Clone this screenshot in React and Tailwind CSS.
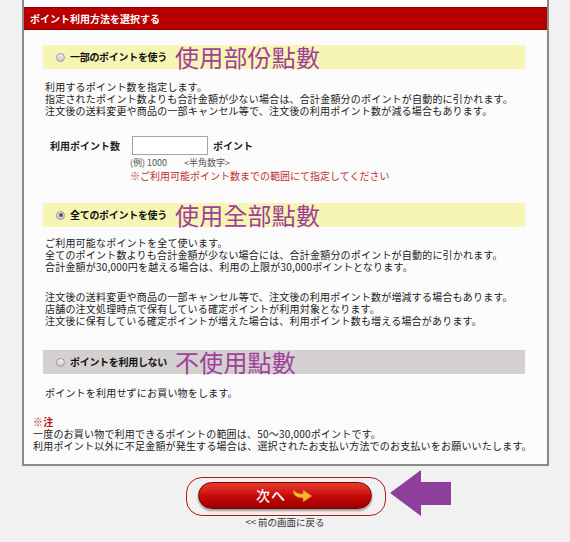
import { useState } from 'react'

const jp = { fontFamily: '"Noto Sans CJK JP", "Noto Sans", sans-serif' }
const tc = { fontFamily: '"Noto Sans CJK TC", "Noto Sans", sans-serif' }

function Radio({ checked }) {
  return (
    <span className="w-[9px] h-[9px] rounded-full border border-[#9a9a9a] bg-gradient-to-b from-[#f4f4f4] to-[#c8c8c8] flex items-center justify-center shrink-0">
      {checked && <span className="w-[4px] h-[4px] rounded-full bg-[#555]" />}
    </span>
  )
}

function OptionBar({ checked, label, zh, grey, onClick }) {
  return (
    <div
      onClick={onClick}
      className={`ml-[10px] mr-[22px] h-[24px] flex items-center pl-[13px] gap-[5px] cursor-pointer ${grey ? 'bg-[#d3d0cf]' : 'bg-[#f6f5b4]'}`}
    >
      <Radio checked={checked} />
      <span className="text-[10px] font-bold text-[#111] tracking-[-0.3px]">{label}</span>
      <span style={tc} className="text-[24px] leading-[24px] text-[#a0409a] ml-[3px]">{zh}</span>
    </div>
  )
}

export default function App() {
  const [mode, setMode] = useState('all')
  const [points, setPoints] = useState('')

  return (
    <div style={jp} className="w-[570px] h-[542px] bg-[#f1f1f1] overflow-hidden text-[#222]">
      {/* main panel */}
      <div className="ml-[22px] w-[527px] h-[466px] border-x-2 border-b-2 border-[#8a8a8a] bg-[#fbfbfb] pt-[7px]">
        <div className="h-[23px] bg-[#b90000] border-y border-[#8e0000] flex items-center pl-[6px]">
          <span className="text-[10px] font-bold text-white">ポイント利用方法を選択する</span>
        </div>

        <div className="pl-[9px] pt-[15px] text-[10px] leading-[12px] tracking-[0.2px]">
          {/* some points */}
          <OptionBar checked={mode === 'some'} label="一部のポイントを使う" zh="使用部份點數" onClick={() => setMode('some')} />
          <div className="ml-[12px] mt-[12px]">
            <p>利用するポイント数を指定します。</p>
            <p>指定されたポイント数よりも合計金額が少ない場合は、合計金額分のポイントが自動的に引かれます。</p>
            <p>注文後の送料変更や商品の一部キャンセル等で、注文後の利用ポイント数が減る場合もあります。</p>
          </div>
          <div className="flex items-center mt-[19px] ml-[17px]">
            <span className="font-bold w-[82px] tracking-normal">利用ポイント数</span>
            <input
              value={points}
              onChange={e => setPoints(e.target.value)}
              className="w-[76px] h-[19px] border border-[#a5a5a5] bg-white outline-none px-1 text-[10px]"
            />
            <span className="font-bold ml-[5px] tracking-normal">ポイント</span>
          </div>
          <div className="ml-[97px] mt-[1px] text-[9px] leading-[13px] tracking-normal">
            <p className="text-[#555]">(例) 1000<span className="ml-[17px]">&lt;半角数字&gt;</span></p>
            <p className="text-[#c03030] text-[10px]">※ご利用可能ポイント数までの範囲にて指定してください</p>
          </div>

          {/* all points */}
          <div className="mt-[21px]">
            <OptionBar checked={mode === 'all'} label="全てのポイントを使う" zh="使用全部點數" onClick={() => setMode('all')} />
          </div>
          <div className="ml-[12px] mt-[10px]">
            <p>ご利用可能なポイントを全て使います。</p>
            <p>全てのポイント数よりも合計金額が少ない場合には、合計金額分のポイントが自動的に引かれます。</p>
            <p>合計金額が30,000円を越える場合は、利用の上限が30,000ポイントとなります。</p>
            <p className="mt-[18px]">注文後の送料変更や商品の一部キャンセル等で、注文後の利用ポイント数が増減する場合もあります。</p>
            <p>店舗の注文処理時点で保有している確定ポイントが利用対象となります。</p>
            <p>注文後に保有している確定ポイントが増えた場合は、利用ポイント数も増える場合があります。</p>
          </div>

          {/* no points */}
          <div className="mt-[23px]">
            <OptionBar checked={mode === 'none'} label="ポイントを利用しない" zh="不使用點數" grey onClick={() => setMode('none')} />
          </div>
          <p className="ml-[12px] mt-[13px]">ポイントを利用せずにお買い物をします。</p>

          <div className="mt-[17px]">
            <p className="text-[#b01818] font-bold">※注</p>
            <p>一度のお買い物で利用できるポイントの範囲は、50～30,000ポイントです。</p>
            <p>利用ポイント以外に不足金額が発生する場合は、選択されたお支払い方法でのお支払いをお願いいたします。</p>
          </div>
        </div>
      </div>

      {/* next button */}
      <div className="flex flex-col items-center mt-[16px]">
        <div className="relative">
          <button className="w-[174px] h-[27px] rounded-full border border-[#7a0000] bg-gradient-to-b from-[#e83a2e] via-[#c80a0a] to-[#9c0000] shadow-[0_2px_2px_rgba(0,0,0,0.35)] flex items-center justify-center gap-[4px]">
            <span className="text-white text-[14px] font-medium tracking-[1px]">次へ</span>
            <svg width="24" height="16" viewBox="0 0 24 16">
              <path d="M3 2 Q3 10 13 10 L13 14 L22 8 L13 2 L13 6 Q7 6 3 2 Z" fill="#f7b733" stroke="#c86a00" strokeWidth="0.6" />
            </svg>
          </button>
          <div className="absolute -left-[12px] -right-[14px] -top-[5px] -bottom-[7px] rounded-[16px] border-[1.5px] border-[#b01818]" />
          <svg className="absolute left-[191px] -top-[12px]" width="64" height="48" viewBox="0 0 64 48">
            <polygon points="1,23 32,0 32,12 62,12 62,35 32,35 32,46" fill="#8e3f9c" />
          </svg>
        </div>
        <span className="text-[9.5px] text-[#333] mt-[6px]">&lt;&lt; 前の画面に戻る</span>
      </div>
    </div>
  )
}
